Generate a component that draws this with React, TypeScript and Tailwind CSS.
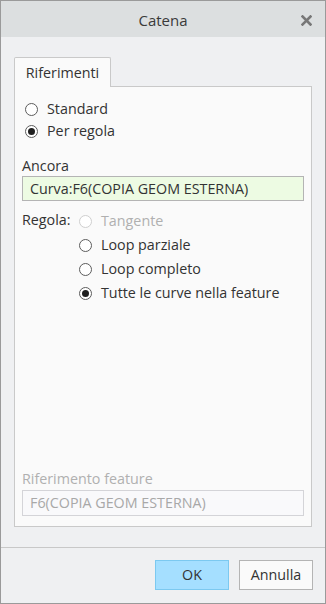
import React from 'react';

const Radio = ({ checked = false, disabled = false }: { checked?: boolean; disabled?: boolean }) => (
    <span
        className={`flex h-[13px] w-[13px] shrink-0 items-center justify-center rounded-full border bg-white ${disabled ? 'border-[#cfcfcf]' : 'border-[#5c5c5c]'}`}
    >
        {checked && <span className="h-[7px] w-[7px] rounded-full bg-[#1f1f1f]" />}
    </span>
);

const Option = ({ label, checked, disabled }: { label: string; checked?: boolean; disabled?: boolean }) => (
    <label className="flex items-center gap-[9px]">
        <Radio checked={checked} disabled={disabled} />
        <span className={disabled ? 'text-[#b0b0b0]' : 'text-[#333]'}>{label}</span>
    </label>
);

export default function App() {
    return (
        <div
            className="flex h-[604px] w-[326px] flex-col border border-[#9a9a9a] bg-[#eff0f2] text-[14.3px] text-[#333]"
            style={{ fontFamily: '"Open Sans", "Noto Sans", sans-serif' }}
        >
            {/* title bar */}
            <div className="relative flex h-[36px] shrink-0 items-center justify-center bg-[#dcdfe0] pt-[2px]">
                <span className="text-[15px] text-[#3a3a3a]">Catena</span>
                <svg className="absolute right-[13px] top-[14px]" width="11" height="11" viewBox="0 0 11 11">
                    <path d="M1.5 1.5 L9.5 9.5 M9.5 1.5 L1.5 9.5" stroke="#777" strokeWidth="2.6" strokeLinecap="square" />
                </svg>
            </div>

            <div className="flex flex-1 flex-col px-[13px] pt-[20px]">
                {/* tab */}
                <div className="relative z-10 -mb-px flex h-[30px] w-[97px] items-center justify-center rounded-t-[2px] border border-b-0 border-[#c9c9c9] bg-[#fafafa]">
                    Riferimenti
                </div>

                {/* panel */}
                <div className="flex h-[441px] flex-col border border-[#c9c9c9] bg-[#fafafa] px-[7px] pb-[10px] pt-[11px]">
                    <div className="flex flex-col pl-[3px]">
                        <div className="flex h-[22px] items-center">
                            <Option label="Standard" />
                        </div>
                        <div className="flex h-[22px] items-center">
                            <Option label="Per regola" checked />
                        </div>
                    </div>

                    <div className="mt-[13px] flex h-[21px] items-center">Ancora</div>
                    <div className="flex h-[25px] items-center border border-[#b4b4b4] bg-[#edfbe3] px-[7px]">
                        Curva:F6(COPIA GEOM ESTERNA)
                    </div>

                    <div className="mt-[8px] flex">
                        <div className="flex h-[22px] w-[57px] items-center">Regola:</div>
                        <div className="flex flex-col">
                            <div className="flex h-[24px] items-center">
                                <Option label="Tangente" disabled />
                            </div>
                            <div className="flex h-[24px] items-center">
                                <Option label="Loop parziale" />
                            </div>
                            <div className="flex h-[24px] items-center">
                                <Option label="Loop completo" />
                            </div>
                            <div className="flex h-[24px] items-center">
                                <Option label="Tutte le curve nella feature" checked />
                            </div>
                        </div>
                    </div>

                    <div className="mt-auto flex h-[22px] items-center text-[#b0b0b0]">Riferimento feature</div>
                    <div className="flex h-[26px] items-center border border-[#d4d4d8] bg-[#f9f9fb] px-[7px] text-[#a8a8a8]">
                        F6(COPIA GEOM ESTERNA)
                    </div>
                </div>
            </div>

            {/* footer */}
            <div className="flex h-[56px] shrink-0 justify-end gap-[10px] border-t border-[#c8c8c8] px-[12px] pt-[12px]">
                <button className="h-[30px] w-[74px] border border-[#7cc9f0] bg-[#a5dfff] text-[#333]">OK</button>
                <button className="h-[30px] w-[74px] border border-[#b4b4b4] bg-[#fafafa] text-[#333]">Annulla</button>
            </div>
        </div>
    );
}
